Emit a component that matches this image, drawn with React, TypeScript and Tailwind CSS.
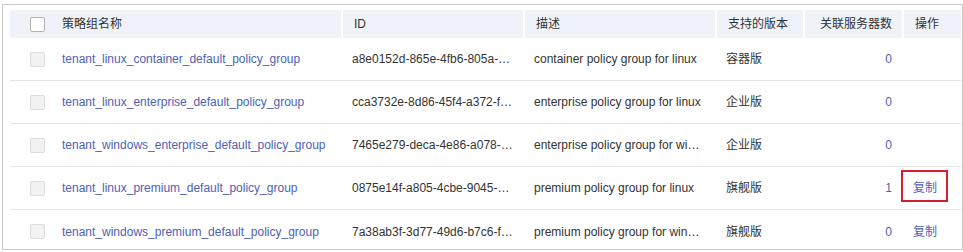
import React from 'react';

const rows = [
  {
    name: 'tenant_linux_container_default_policy_group',
    id: 'a8e0152d-865e-4fb6-805a-…',
    desc: 'container policy group for linux',
    edition: '容器版',
    count: 0,
    copy: false,
  },
  {
    name: 'tenant_linux_enterprise_default_policy_group',
    id: 'cca3732e-8d86-45f4-a372-f…',
    desc: 'enterprise policy group for linux',
    edition: '企业版',
    count: 0,
    copy: false,
  },
  {
    name: 'tenant_windows_enterprise_default_policy_group',
    id: '7465e279-deca-4e86-a078-…',
    desc: 'enterprise policy group for wi…',
    edition: '企业版',
    count: 0,
    copy: false,
  },
  {
    name: 'tenant_linux_premium_default_policy_group',
    id: '0875e14f-a805-4cbe-9045-…',
    desc: 'premium policy group for linux',
    edition: '旗舰版',
    count: 1,
    copy: true,
    highlight: true,
  },
  {
    name: 'tenant_windows_premium_default_policy_group',
    id: '7a38ab3f-3d77-49d6-b7c6-f…',
    desc: 'premium policy group for win…',
    edition: '旗舰版',
    count: 0,
    copy: true,
  },
];

const cols = 'grid grid-cols-[331px_182px_192px_88px_99px_1fr]';

export default function App() {
  return (
    <div
      className="w-[963px] h-[252px] bg-white text-[12px] text-[#333]"
      style={{ fontFamily: '"Liberation Sans", Arial, "Noto Sans CJK SC", sans-serif' }}
    >
      <div className="ml-[2px] mt-[4px] w-[961px] h-[246px] border border-[#c8c8c8] pl-[7px] pt-[5px] pr-[1px] overflow-hidden">
        {/* header */}
        <div className={`${cols} h-[28px] bg-[#eff2f8] items-center`}>
          <div className="flex items-center h-full pl-[20px]">
            <span className="w-[15px] h-[15px] border border-[#b4b4b4] rounded-[2px] bg-white" />
            <span className="ml-[17px]">策略组名称</span>
          </div>
          <div className="h-full flex items-center pl-[11px] border-l-2 border-white">ID</div>
          <div className="h-full flex items-center pl-[11px] border-l-2 border-white">描述</div>
          <div className="h-full flex items-center pl-[11px] border-l-2 border-white">支持的版本</div>
          <div className="h-full flex items-center justify-end pr-[10px] border-l-2 border-white">关联服务器数</div>
          <div className="h-full flex items-center pl-[11px] border-l-2 border-white">操作</div>
        </div>

        {rows.map((r, i) => (
          <div
            key={r.name}
            className={`${cols} h-[43px] items-center ${i < rows.length - 1 ? 'border-b border-[#e4e4e4]' : ''}`}
          >
            <div className="flex items-center pl-[20px]">
              <span className="w-[15px] h-[15px] border border-[#dcdcdc] rounded-[2px] bg-[#f2f2f2]" />
              <span className="ml-[17px] text-[#4e62b4] whitespace-nowrap">{r.name}</span>
            </div>
            <div className="pl-[11px] whitespace-nowrap">{r.id}</div>
            <div className="pl-[11px] whitespace-nowrap">{r.desc}</div>
            <div className="pl-[11px]">{r.edition}</div>
            <div className="pr-[10px] text-right text-[#4e62b4]">{r.count}</div>
            <div className="pl-[11px] relative">
              {r.copy && <span className="text-[#4e62b4]">复制</span>}
              {r.highlight && (
                <span className="absolute left-[-1px] top-[-9px] w-[47px] h-[32px] border-2 border-[#d0202e]" />
              )}
            </div>
          </div>
        ))}
      </div>
    </div>
  );
}
